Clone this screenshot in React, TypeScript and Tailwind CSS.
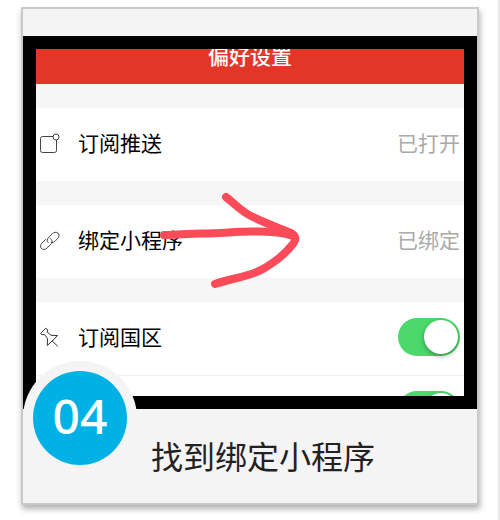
import type { ReactNode } from "react";

function NoticeIcon() {
  return (
    <svg viewBox="0 0 22 22" className="h-[22px] w-[22px]" fill="none" stroke="#444" strokeWidth="1" aria-hidden="true">
      <path d="M14 4.500H3.500A2 2 0 0 0 1.500 6.500V18.500A2 2 0 0 0 3.500 20.500H15.500A2 2 0 0 0 17.500 18.500V8" />
      <circle cx="17" cy="5" r="3" />
    </svg>
  );
}

function LinkIcon() {
  return (
    <svg viewBox="0 0 22 22" className="h-[22px] w-[22px]" fill="none" stroke="#444" strokeWidth="1" strokeLinecap="round" aria-hidden="true">
      <path d="M9.200 13.600C7.800 12.200 7.900 10.200 9.200 8.900L13.400 4.700C15 3.100 17.400 2.700 19 4.200C20.600 5.800 20.200 8 18.700 9.500L15.600 12.600C14.600 13.500 13.400 13.800 12.200 13.500" />
      <path d="M11.200 9.500C13.400 10.500 13.700 13.400 12.300 14.800L8 19.100C6.400 20.700 4 21 2.500 19.500C1 18 1.300 15.700 2.900 14.100L6.500 10.500" />
    </svg>
  );
}

function PinIcon() {
  return (
    <svg viewBox="0 0 22 22" className="h-[22px] w-[22px]" fill="none" stroke="#333" strokeWidth="1" strokeLinejoin="round" strokeLinecap="round" aria-hidden="true">
      <path d="M6.500 2.500L1.500 7.500L3 8.700L5.500 8.500L8.500 12.500L8.300 19.500L13.200 15L18.500 9.500L12 9.300L8.300 6.200L8.500 4Z" />
      <path d="M13.200 15L18.500 20" />
    </svg>
  );
}

function Row({ icon, title, children }: { icon: ReactNode; title: string; children: ReactNode }) {
  return (
    <div className="flex h-[73px] items-center bg-white pr-1 pb-1 pl-[3px]">
      {icon}
      <span className="ml-[17px] flex-1 pb-0.5 text-black">{title}</span>
      {children}
    </div>
  );
}

function Toggle({ label }: { label: string }) {
  return (
    <input
      type="checkbox"
      role="switch"
      aria-label={label}
      defaultChecked
      className="flex h-[38px] w-[62px] shrink-0 appearance-none items-center justify-start rounded-full bg-gray-200 p-0.5 before:block before:size-[34px] before:rounded-full before:bg-white before:shadow-[0_2px_5px_rgba(0,0,0,0.35)] before:content-[''] checked:justify-end checked:bg-[#4bd96c]"
    />
  );
}

function Arrow() {
  return (
    <svg
      viewBox="0 0 150 100"
      className="pointer-events-none absolute top-[141px] left-[119px] h-[100px] w-[150px]"
      fill="none"
      stroke="#fb4b59"
      strokeWidth="8"
      strokeLinecap="round"
      strokeLinejoin="round"
      aria-hidden="true"
    >
      <path d="M9 45C22 45 34 43.500 48 43.500C68 43.500 82 41 101 41.500C117 42 127 42 138 46" />
      <path d="M71 7C80 14 86 21 96 26C110 33 124 38 136 43C142 46 141 50 138 54C128 66 121 71 108 79C94 87 77 88 60 94" />
    </svg>
  );
}

export default function App() {
  return (
    <main className="border-r-2 border-[#e9e9e9] bg-white pt-[7px] pr-[19px] pb-[15px] pl-[21px] font-['Noto_Sans','Noto_Sans_CJK_SC',sans-serif]">
      <article className="border-2 border-[#c9c9c9] bg-[#f4f4f4] pt-[27px] shadow-[1px_4px_6px_rgba(0,0,0,0.3)]">
        <div className="relative bg-black p-[13px]">
          <section className="relative bg-[#f6f6f6] font-['Noto_Sans_CJK_SC',sans-serif] text-[21px] leading-[30px]">
            <header className="flex h-[35px] items-end justify-center overflow-hidden bg-[#e23629] pb-3.5">
              <h1 className="font-medium text-white">偏好设置</h1>
            </header>
            <div className="flex flex-col gap-6 pt-6">
              <Row icon={<NoticeIcon />} title="订阅推送">
                <span className="pb-0.5 text-[#aaa]">已打开</span>
              </Row>
              <Row icon={<LinkIcon />} title="绑定小程序">
                <span className="pb-0.5 text-[#aaa]">已绑定</span>
              </Row>
              <div>
                <Row icon={<PinIcon />} title="订阅国区">
                  <Toggle label="订阅国区" />
                </Row>
                <div className="flex h-[21px] items-start justify-end overflow-hidden border-t border-[#eee] bg-white pt-[15px] pr-1">
                  <Toggle label="订阅" />
                </div>
              </div>
            </div>
            <Arrow />
          </section>
          <div className="absolute -bottom-[66px] left-0 flex size-[114px] items-center justify-center rounded-full bg-[#f4f4f4]">
            <span className="flex size-[94px] items-center justify-center rounded-full bg-[#00b1e6] pb-1 text-[48px] leading-none font-medium text-white">
              04
            </span>
          </div>
        </div>
        <footer className="flex h-[94px] items-center justify-center pb-0.5 pl-[26px] text-[32px] leading-[48px] text-[#222]">
          <h2 className="font-['Noto_Sans_CJK_SC',sans-serif]">找到绑定小程序</h2>
        </footer>
      </article>
    </main>
  );
}
